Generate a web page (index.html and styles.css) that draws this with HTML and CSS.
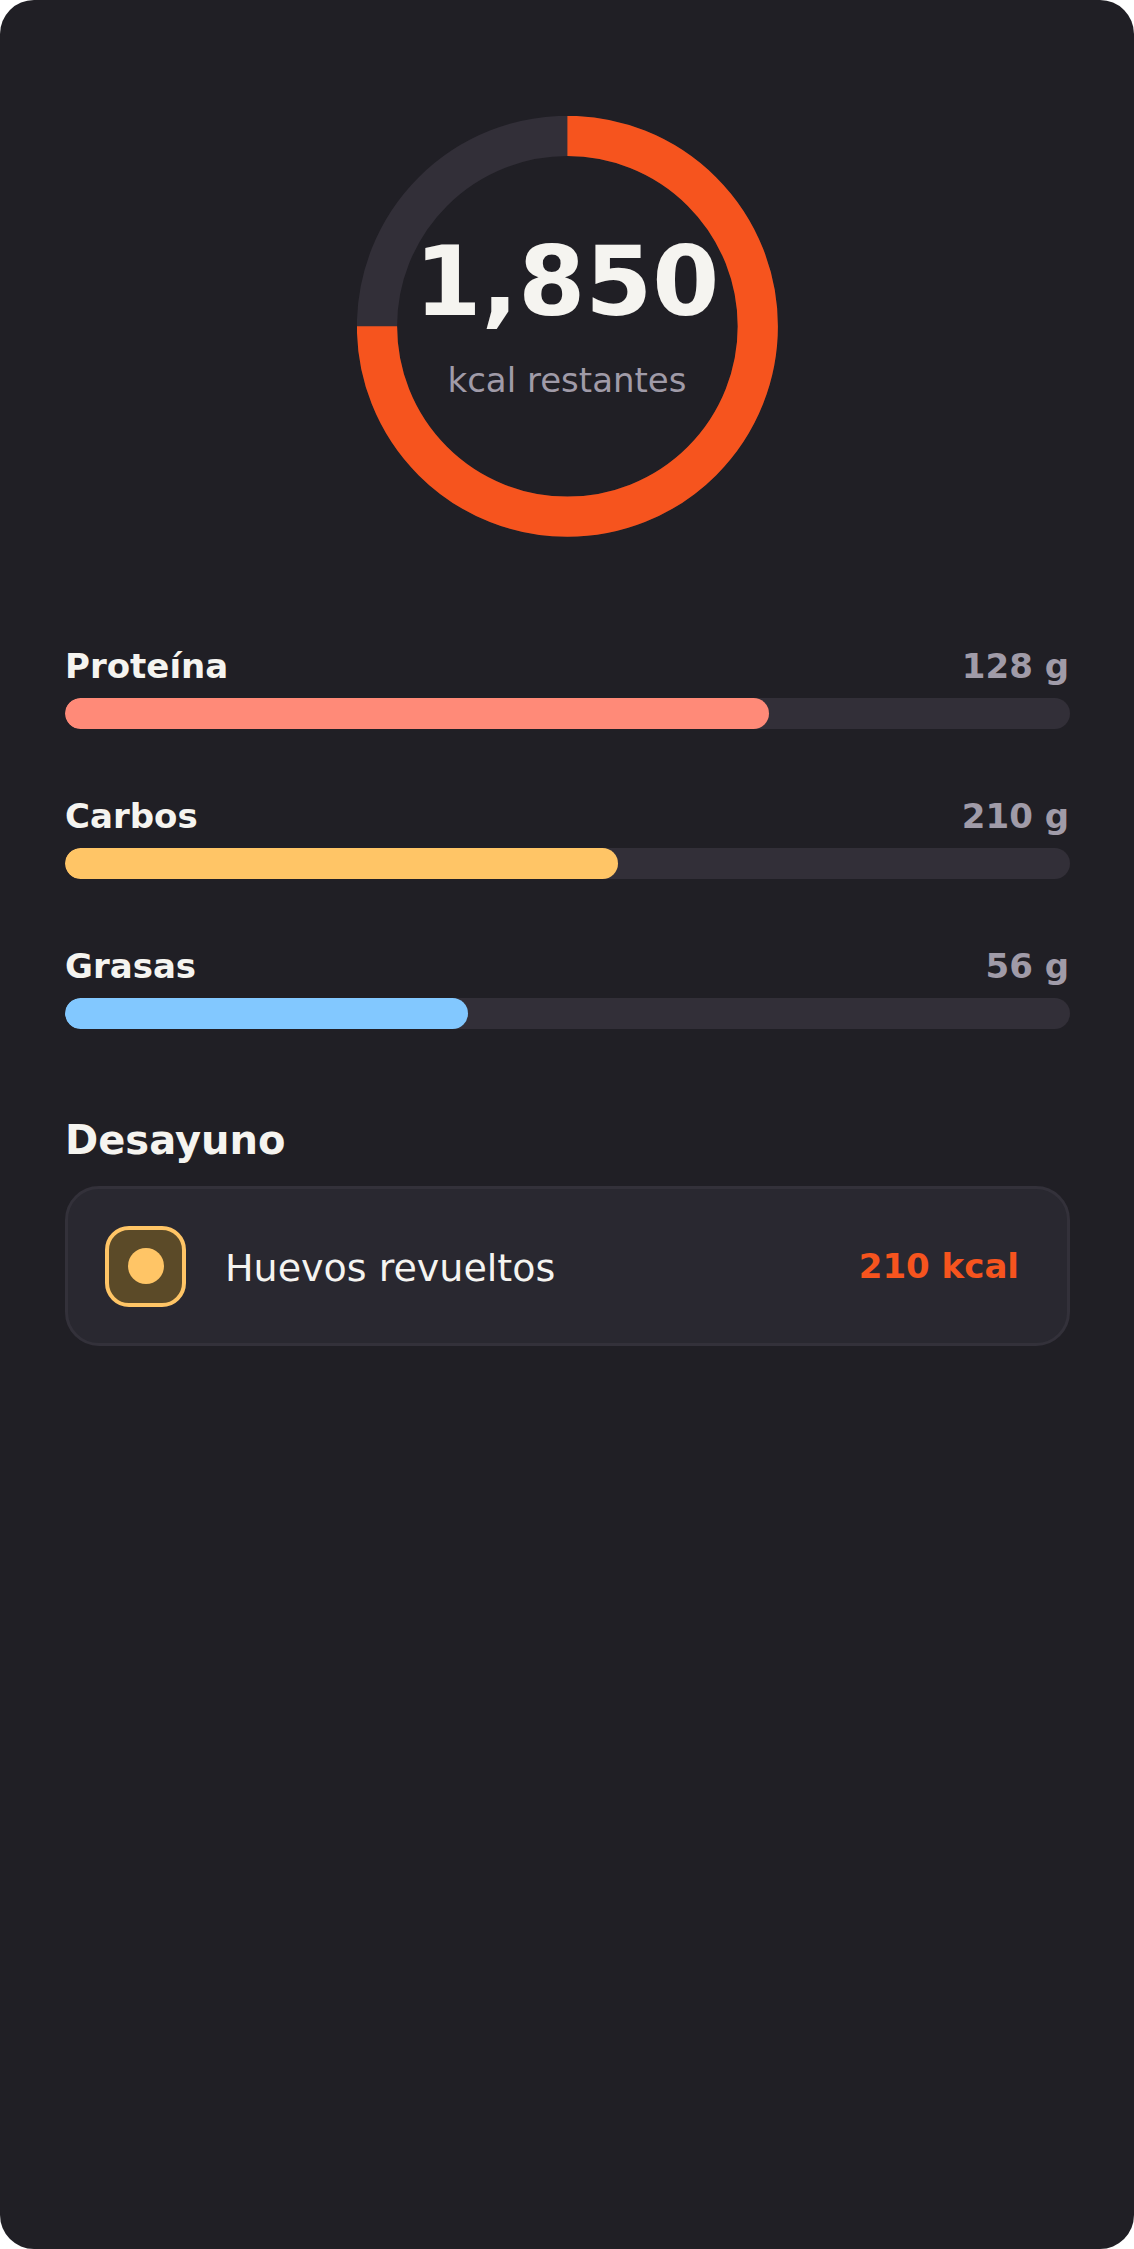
FILE: index.html
```html
<!DOCTYPE html>
<html lang="es">
<head>
<meta charset="utf-8">
<title>Calorías</title>
<link rel="stylesheet" href="styles.css">
</head>
<body>
<main class="screen">
  <section class="ring-wrap">
    <div class="ring">
      <svg class="ring-svg" width="421" height="421" viewBox="0 0 421 421" aria-hidden="true">
        <circle class="ring-track" cx="210.4" cy="210.3" r="190.4"/>
        <path class="ring-value" d="M210.4 19.9 A190.4 190.4 0 1 1 20 210.3"/>
      </svg>
      <div class="ring-text">
        <div class="ring-num">1,850</div>
        <div class="ring-label">kcal restantes</div>
      </div>
    </div>
  </section>
  <section class="macros">
    <div class="macro">
      <div class="macro-head"><span class="macro-name">Proteína</span><span class="macro-val">128 g</span></div>
      <div class="bar"><div class="fill fill-protein" style="width:70%"></div></div>
    </div>
    <div class="macro">
      <div class="macro-head"><span class="macro-name">Carbos</span><span class="macro-val">210 g</span></div>
      <div class="bar"><div class="fill fill-carbs" style="width:55%"></div></div>
    </div>
    <div class="macro">
      <div class="macro-head"><span class="macro-name">Grasas</span><span class="macro-val">56 g</span></div>
      <div class="bar"><div class="fill fill-fat" style="width:40.1%"></div></div>
    </div>
  </section>
  <h2 class="section-title">Desayuno</h2>
  <div class="card">
    <div class="food-icon"><span class="food-dot"></span></div>
    <div class="food-name">Huevos revueltos</div>
    <div class="food-kcal">210 kcal</div>
  </div>
</main>
</body>
</html>
```
FILE: styles.css
```css
* { box-sizing: border-box; }
html, body { margin: 0; padding: 0; background: #fff; }
body { font-family: "DejaVu Sans", sans-serif; }
.screen {
  width: 1134px;
  height: 2249px;
  background: #201f25;
  border-radius: 34px;
  padding: 116px 64px 0 65px;
  overflow: hidden;
}
.ring-wrap { display: flex; justify-content: center; }
.ring { position: relative; width: 421px; height: 421px; }
.ring-svg { display: block; }
.ring-track { fill: none; stroke: #322f38; stroke-width: 40.2; }
.ring-value { fill: none; stroke: #f6541e; stroke-width: 40.2; }
.ring-text {
  position: absolute;
  inset: 0 1px 0 0;
  display: flex;
  flex-direction: column;
  align-items: center;
}
.ring-num {
  margin-top: 110px;
  font-size: 96.4px;
  line-height: 112px;
  font-weight: 700;
  color: #f5f4f0;
  white-space: nowrap;
}
.ring-label {
  margin-top: 22px;
  font-size: 34px;
  line-height: 40px;
  color: #a09ba8;
}
.macros { margin-top: 109px; display: flex; flex-direction: column; gap: 67px; }
.macro-head {
  display: flex;
  justify-content: space-between;
  align-items: center;
  height: 40px;
  margin-bottom: 12px;
  font-size: 34.02px;
  font-weight: 700;
}
.macro-name { color: #f5f4f0; }
.macro-val { color: #a09ba8; padding-right: 1px; }
.bar { height: 31px; border-radius: 15.5px; background: #322f38; overflow: hidden; }
.fill { height: 100%; border-radius: 15.5px; }
.fill-protein { background: #ff8a78; }
.fill-carbs { background: #ffc566; }
.fill-fat { background: #82c8ff; }
.section-title {
  margin: 87px 0 0;
  font-size: 40px;
  line-height: 48px;
  font-weight: 700;
  color: #f5f4f0;
}
.card {
  margin-top: 22px;
  height: 160px;
  display: flex;
  align-items: center;
  padding: 0 48px 0 37px;
  background: #292830;
  border: 3px solid #33313a;
  border-radius: 34px;
}
.food-icon {
  width: 81px;
  height: 81px;
  flex: none;
  display: flex;
  align-items: center;
  justify-content: center;
  background: #5b4a28;
  border: 4px solid #ffc566;
  border-radius: 24px;
}
.food-dot { width: 36px; height: 36px; border-radius: 50%; background: #ffc566; }
.food-name {
  flex: 1;
  margin-left: 39px;
  padding-top: 4px;
  font-size: 38px;
  color: #f5f4f0;
}
.food-kcal { font-size: 34.02px; font-weight: 700; color: #f6541e; }
```
